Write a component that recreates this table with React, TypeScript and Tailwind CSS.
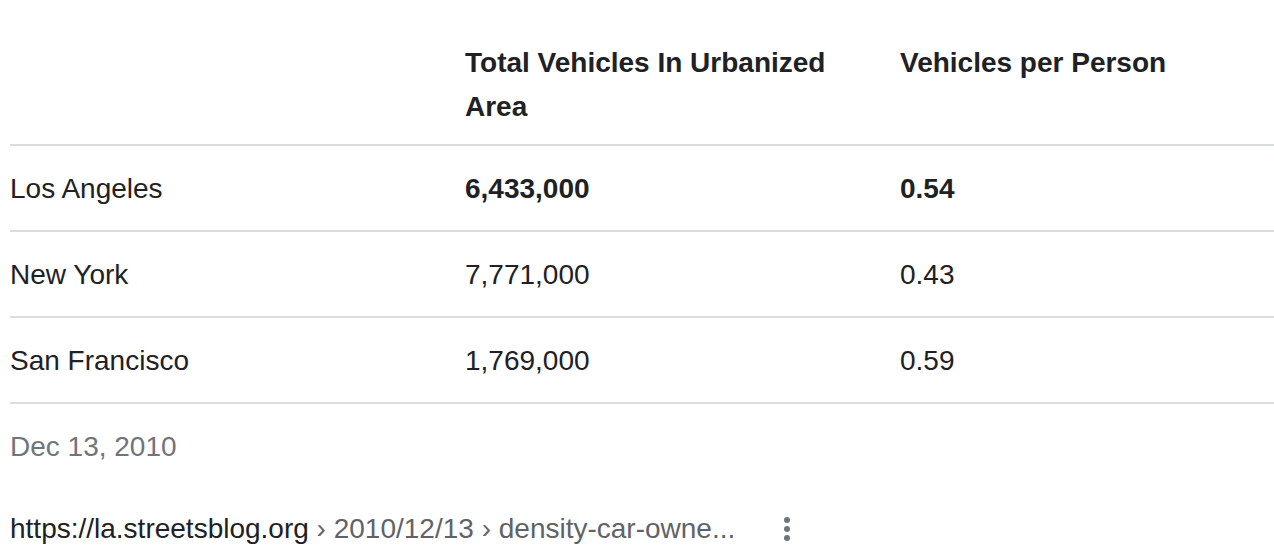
const rows = [
  { city: "Los Angeles", total: "6,433,000", perPerson: "0.54", bold: true },
  { city: "New York", total: "7,771,000", perPerson: "0.43", bold: false },
  { city: "San Francisco", total: "1,769,000", perPerson: "0.59", bold: false },
];

const App = () => {
  return (
    <div className="min-h-screen bg-white pl-[10px] font-['Liberation_Sans',Arial,sans-serif] text-[28px] leading-[44px] text-[#202124]">
      {/* TABLE */}
      <div className="grid grid-cols-[455px_435px_1fr]">
        {/* header */}
        <div className="border-b-2 border-[#dadce0] pt-[40px] pb-[16px]" />
        <div className="border-b-2 border-[#dadce0] pt-[41px] pb-[15px] pr-6 font-bold">
          Total Vehicles In Urbanized Area
        </div>
        <div className="border-b-2 border-[#dadce0] pt-[41px] pb-[15px] font-bold">
          Vehicles per Person
        </div>

        {rows.map((row) => (
          <div key={row.city} className="contents">
            <div className="border-b-2 border-[#dadce0] pt-[21px] pb-[19px]">{row.city}</div>
            <div
              className={`border-b-2 border-[#dadce0] pt-[21px] pb-[19px] ${row.bold ? "font-bold" : ""}`}
            >
              {row.total}
            </div>
            <div
              className={`border-b-2 border-[#dadce0] pt-[21px] pb-[19px] ${row.bold ? "font-bold" : ""}`}
            >
              {row.perPerson}
            </div>
          </div>
        ))}
      </div>

      {/* DATE */}
      <div className="mt-[21px] text-[#70757a]">Dec 13, 2010</div>

      {/* SOURCE */}
      <div className="mt-[38px] flex items-center">
        <span className="whitespace-nowrap">
          https://la.streetsblog.org
          <span className="text-[#5f6368]"> › 2010/12/13 › density-car-owne...</span>
        </span>
        <button className="ml-[30px] flex h-[44px] w-[44px] flex-col items-center justify-center gap-[3px]">
          <span className="h-[6px] w-[6px] rounded-full bg-[#70757a]" />
          <span className="h-[6px] w-[6px] rounded-full bg-[#70757a]" />
          <span className="h-[6px] w-[6px] rounded-full bg-[#70757a]" />
        </button>
      </div>
    </div>
  );
};

export default App;
